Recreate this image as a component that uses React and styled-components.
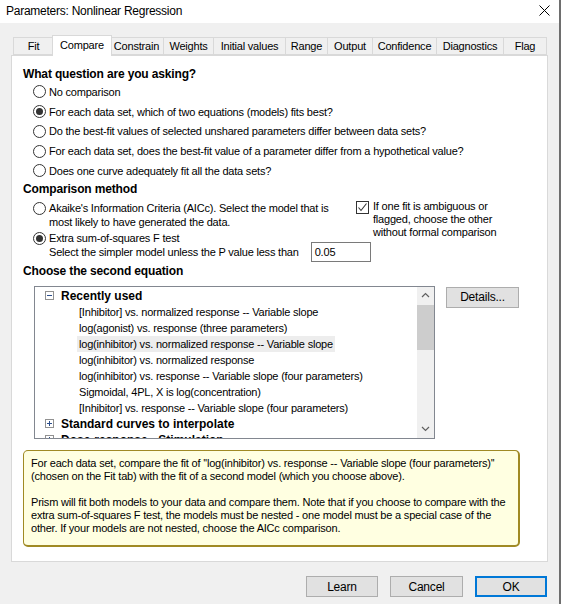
import React from 'react';
import styled, { createGlobalStyle } from 'styled-components';

const GlobalStyle = createGlobalStyle`
  html, body {
    margin: 0;
    padding: 0;
    background: #f0f0f0;
  }
  body {
    font-family: "Liberation Sans", Arial, sans-serif;
    font-size: 11px;
    letter-spacing: -0.2px;
    color: #000;
  }
`;

const tabs = [
  { label: 'Fit', width: 41 },
  { label: 'Compare', width: 56, active: true },
  { label: 'Constrain', width: 54 },
  { label: 'Weights', width: 50 },
  { label: 'Initial values', width: 72 },
  { label: 'Range', width: 42 },
  { label: 'Output', width: 45 },
  { label: 'Confidence', width: 64 },
  { label: 'Diagnostics', width: 67 },
  { label: 'Flag', width: 43 },
];

const questions = [
  'No comparison',
  'For each data set, which of two equations (models) fits best?',
  'Do the best-fit values of selected unshared parameters differ between data sets?',
  'For each data set, does the best-fit value of a parameter differ from a hypothetical value?',
  'Does one curve adequately fit all the data sets?',
];

const recent = [
  '[Inhibitor] vs. normalized response -- Variable slope',
  'log(agonist) vs. response (three parameters)',
  'log(inhibitor) vs. normalized response -- Variable slope',
  'log(inhibitor) vs. normalized response',
  'log(inhibitor) vs. response -- Variable slope (four parameters)',
  'Sigmoidal, 4PL, X is log(concentration)',
  '[Inhibitor] vs. response -- Variable slope (four parameters)',
];

function Radio({ checked }) {
  return <RadioCircle>{checked && <RadioDot />}</RadioCircle>;
}

function Expander({ open }) {
  return (
    <ExpanderBox>
      <svg width="7" height="7" viewBox="0 0 7 7">
        <line x1="1" y1="3.5" x2="6" y2="3.5" stroke="#2d4f8c" strokeWidth="1" />
        {!open && <line x1="3.5" y1="1" x2="3.5" y2="6" stroke="#2d4f8c" strokeWidth="1" />}
      </svg>
    </ExpanderBox>
  );
}

function Chevron({ down }) {
  return (
    <svg width="9" height="6" viewBox="0 0 9 6">
      <polyline
        points={down ? '1,1 4.5,4.5 8,1' : '1,5 4.5,1.5 8,5'}
        fill="none"
        stroke="#606060"
        strokeWidth="1.2"
      />
    </svg>
  );
}

export default function App() {
  return (
    <Window>
      <GlobalStyle />
      <TitleBar>
        <Title>Parameters: Nonlinear Regression</Title>
        <CloseIcon width="11" height="11" viewBox="0 0 11 11">
          <line x1="0.5" y1="0.5" x2="10.5" y2="10.5" stroke="#000" strokeWidth="1" />
          <line x1="10.5" y1="0.5" x2="0.5" y2="10.5" stroke="#000" strokeWidth="1" />
        </CloseIcon>
      </TitleBar>

      <TabRow>
        {tabs.map((t) => (
          <Tab key={t.label} $active={t.active} $width={t.width}>
            {t.label}
          </Tab>
        ))}
      </TabRow>

      <Pane>
        <Heading>What question are you asking?</Heading>
        {questions.map((q, i) => (
          <RadioRow key={q}>
            <Radio checked={i === 1} />
            <span>{q}</span>
          </RadioRow>
        ))}

        <Heading>Comparison method</Heading>
        <MethodGrid>
          <MethodOption>
            <Radio />
            <MethodLabel>
              Akaike's Information Criteria (AICc). Select the model that is
              <br />
              most likely to have generated the data.
            </MethodLabel>
          </MethodOption>
          <CheckOption>
            <CheckBox>
              <svg width="11" height="11" viewBox="0 0 11 11">
                <polyline points="1.5,5.5 4,8.5 9.5,1.5" fill="none" stroke="#333" strokeWidth="1.1" />
              </svg>
            </CheckBox>
            <CheckLabel>
              If one fit is ambiguous or
              <br />
              flagged, choose the other
              <br />
              without formal comparison
            </CheckLabel>
          </CheckOption>
          <MethodOption>
            <Radio checked />
            <MethodLabel>
              Extra sum-of-squares F test
              <br />
              Select the simpler model unless the P value less than
            </MethodLabel>
            <PInput>0.05</PInput>
          </MethodOption>
        </MethodGrid>

        <Heading $gap>Choose the second equation</Heading>
        <EquationRow>
          <ListBox>
            <Tree>
              <GroupRow>
                <Expander open />
                <GroupLabel>Recently used</GroupLabel>
              </GroupRow>
              {recent.map((r, i) => (
                <ItemRow key={r}>
                  <ItemLabel $selected={i === 2}>{r}</ItemLabel>
                </ItemRow>
              ))}
              <GroupRow>
                <Expander />
                <GroupLabel>Standard curves to interpolate</GroupLabel>
              </GroupRow>
              <GroupRow>
                <Expander />
                <GroupLabel>Dose-response - Stimulation</GroupLabel>
              </GroupRow>
            </Tree>
            <ScrollBar>
              <ScrollArrow>
                <Chevron />
              </ScrollArrow>
              <ScrollTrack>
                <ScrollThumb />
              </ScrollTrack>
              <ScrollArrow>
                <Chevron down />
              </ScrollArrow>
            </ScrollBar>
          </ListBox>
          <Button $width={73}>Details...</Button>
        </EquationRow>

        <HelpBox>
          <p>
            For each data set, compare the fit of ''log(inhibitor) vs. response -- Variable slope (four parameters)''
            <br />
            (chosen on the Fit tab) with the fit of a second model (which you choose above).
          </p>
          <p>
            Prism will fit both models to your data and compare them. Note that if you choose to compare with the
            <br />
            extra sum-of-squares F test, the models must be nested - one model must be a special case of the
            <br />
            other. If your models are not nested, choose the AICc comparison.
          </p>
        </HelpBox>
      </Pane>

      <Footer>
        <Button $width={72}>Learn</Button>
        <Button $width={73}>Cancel</Button>
        <Button $width={72} $default>
          OK
        </Button>
      </Footer>
    </Window>
  );
}

const Window = styled.div`
  box-sizing: border-box;
  width: 561px;
  height: 604px;
  background: #f0f0f0;
  border-right: 2px solid #6e6e6e;
  overflow: hidden;
`;

const TitleBar = styled.div`
  height: 23px;
  background: #fff;
  display: flex;
  align-items: center;
  justify-content: space-between;
  padding: 0 9px 2px 6px;
  box-sizing: border-box;
`;

const Title = styled.span`
  font-size: 12px;
  letter-spacing: -0.25px;
`;

const CloseIcon = styled.svg`
  display: block;
`;

const TabRow = styled.div`
  display: flex;
  align-items: flex-end;
  height: 21px;
  margin: 11px 0 0 13px;
  position: relative;
  z-index: 1;
`;

const Tab = styled.div`
  box-sizing: border-box;
  width: ${(p) => (p.$active ? p.$width + 4 : p.$width)}px;
  height: ${(p) => (p.$active ? 21 : 18)}px;
  margin: 0 ${(p) => (p.$active ? -2 : 0)}px ${(p) => (p.$active ? -1 : 0)}px;
  border: 1px solid #d9d9d9;
  border-bottom: ${(p) => (p.$active ? 'none' : '1px solid #d9d9d9')};
  border-left: ${(p) => (p.$active ? '1px solid #d9d9d9' : 'none')};
  background: ${(p) => (p.$active ? '#fff' : '#f0f0f0')};
  display: flex;
  align-items: center;
  justify-content: center;
  padding-bottom: ${(p) => (p.$active ? 2 : 0)}px;
  position: relative;
  z-index: ${(p) => (p.$active ? 2 : 0)};
  &:first-child {
    border-left: 1px solid #d9d9d9;
  }
`;

const Pane = styled.div`
  box-sizing: border-box;
  margin-left: 11px;
  width: 537px;
  height: 507px;
  background: #fff;
  border: 1px solid #d9d9d9;
  padding: 10px 0 0 11px;
`;

const Heading = styled.div`
  font-weight: bold;
  font-size: 12px;
  letter-spacing: -0.15px;
  line-height: 16px;
  margin-top: ${(p) => (p.$gap ? 4 : 0)}px;
`;

const RadioRow = styled.div`
  display: flex;
  align-items: center;
  height: 19.75px;
  padding-left: 10px;
  gap: 3px;
`;

const RadioCircle = styled.span`
  box-sizing: border-box;
  width: 13px;
  height: 13px;
  border-radius: 50%;
  border: 1px solid #333;
  background: #fff;
  display: flex;
  align-items: center;
  justify-content: center;
  flex-shrink: 0;
`;

const RadioDot = styled.span`
  width: 7px;
  height: 7px;
  border-radius: 50%;
  background: #333;
`;

const MethodGrid = styled.div`
  display: grid;
  grid-template-columns: 333px 1fr;
  grid-template-rows: auto auto;
  row-gap: 2px;
  margin-top: 4px;
`;

const MethodOption = styled.div`
  display: flex;
  align-items: flex-start;
  padding-left: 10px;
  gap: 3px;
  grid-column: 1;
  ${RadioCircle} {
    margin-top: 1px;
  }
`;

const MethodLabel = styled.div`
  line-height: 14px;
  white-space: nowrap;
`;

const PInput = styled.div`
  box-sizing: border-box;
  width: 60px;
  height: 20px;
  border: 1px solid #7a7a7a;
  background: #fff;
  padding: 3px 0 0 3px;
  line-height: 13px;
  align-self: flex-end;
  flex-shrink: 0;
  margin: 0 0 -3px 9px;
`;

const CheckOption = styled.div`
  grid-column: 2;
  grid-row: 1 / 3;
  display: flex;
  align-items: flex-start;
  gap: 4px;
  margin-top: 0;
`;

const CheckBox = styled.span`
  box-sizing: border-box;
  width: 13px;
  height: 13px;
  border: 1px solid #333;
  background: #fff;
  display: flex;
  align-items: center;
  justify-content: center;
  flex-shrink: 0;
`;

const CheckLabel = styled.div`
  line-height: 13px;
  margin-top: -1px;
`;

const EquationRow = styled.div`
  display: flex;
  align-items: flex-start;
  margin-top: 7px;
  padding-left: 11px;
  gap: 11px;
`;

const ListBox = styled.div`
  box-sizing: border-box;
  width: 401px;
  height: 153px;
  border: 1px solid #828790;
  display: flex;
  overflow: hidden;
`;

const Tree = styled.div`
  flex: 1;
  padding-top: 1px;
  overflow: hidden;
`;

const GroupRow = styled.div`
  display: flex;
  align-items: center;
  height: 16px;
  padding-left: 10px;
  gap: 7px;
`;

const ExpanderBox = styled.span`
  box-sizing: border-box;
  width: 9px;
  height: 9px;
  border: 1px solid #919191;
  display: flex;
  align-items: center;
  justify-content: center;
  svg {
    display: block;
  }
`;

const GroupLabel = styled.span`
  font-weight: bold;
  font-size: 12px;
  letter-spacing: 0;
`;

const ItemRow = styled.div`
  display: flex;
  align-items: stretch;
  height: 16px;
  padding-left: 42px;
`;

const ItemLabel = styled.span`
  display: flex;
  align-items: center;
  padding: 0 2px;
  background: ${(p) => (p.$selected ? '#ededed' : 'transparent')};
`;

const ScrollBar = styled.div`
  width: 17px;
  background: #f0f0f0;
  display: flex;
  flex-direction: column;
`;

const ScrollArrow = styled.div`
  height: 17px;
  display: flex;
  align-items: center;
  justify-content: center;
`;

const ScrollTrack = styled.div`
  flex: 1;
  padding-top: 1px;
`;

const ScrollThumb = styled.div`
  height: 45px;
  background: #cdcdcd;
`;

const Button = styled.div`
  box-sizing: border-box;
  width: ${(p) => p.$width}px;
  height: 21px;
  background: #e1e1e1;
  border: ${(p) => (p.$default ? '2px solid #0078d7' : '1px solid #adadad')};
  display: flex;
  align-items: center;
  justify-content: center;
  font-size: 12px;
  letter-spacing: -0.2px;
  margin-top: 1px;
`;

const HelpBox = styled.div`
  box-sizing: border-box;
  margin-top: 11px;
  width: 497px;
  height: 97px;
  background: #ffffe1;
  border: 1px solid #a08a24;
  border-right-width: 2px;
  border-bottom-width: 2px;
  border-radius: 5px;
  padding: 6px 0 0 7px;
  line-height: 13px;
  p {
    margin: 0 0 13px;
  }
`;

const Footer = styled.div`
  display: flex;
  justify-content: flex-end;
  gap: 12px;
  padding: 13px 12px 0 0;
`;
